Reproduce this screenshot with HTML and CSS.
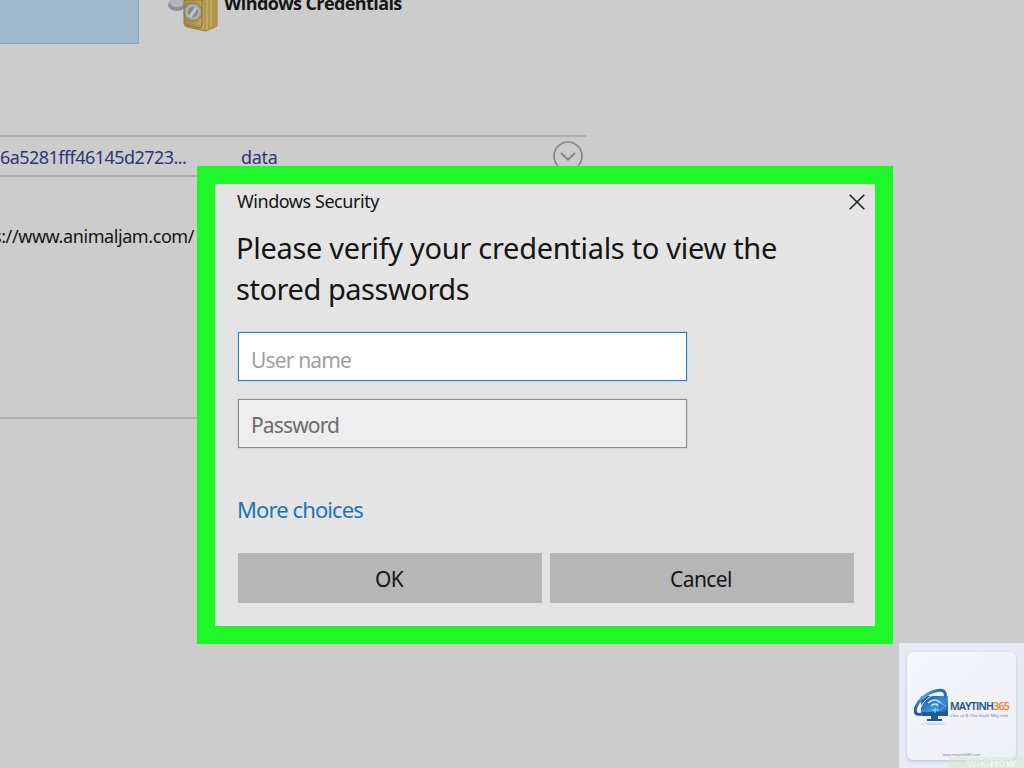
FILE: index.html
```html
<!DOCTYPE html>
<html lang="en">
<head>
<meta charset="utf-8">
<title>Windows Security</title>
<link rel="stylesheet" href="styles.css">
</head>
<body>
<main class="manager">
  <header class="tabs">
    <div class="tab-selected"></div>
    <div class="tab">
      <svg class="vault" viewBox="0 0 54 34" width="54" height="34">
        <defs>
          <linearGradient id="gold" x1="0" x2="1"><stop offset="0" stop-color="#a28b45"/><stop offset=".6" stop-color="#bda657"/><stop offset="1" stop-color="#9a8135"/></linearGradient>
        </defs>
        <ellipse cx="10" cy="5" rx="9" ry="6" fill="#8d9298"/>
        <ellipse cx="10" cy="3" rx="7" ry="4" fill="#b3b7bb"/>
        <path d="M17 0H50V26L39 31L20 27Q17 26 17 23Z" fill="url(#gold)" stroke="#8c7a3c"/>
        <path d="M37 0V30L39 31L50 26V0Z" fill="#ae974a"/>
        <path d="M40 0V29M44 0V27" stroke="#c7b269" stroke-width="1.500"/>
        <path d="M35 0V24Q35 28 32 28L20 25" fill="none" stroke="#857233"/>
        <circle cx="26" cy="12" r="9" fill="#a5a594" stroke="#817b5f"/>
        <circle cx="26" cy="12" r="6" fill="#84898b" stroke="#b3b5ad" stroke-width="1.500"/>
        <path d="M23 17L29 8" stroke="#c4c7c5" stroke-width="3"/>
      </svg>
      <strong class="tab-title">Windows Credentials</strong>
    </div>
  </header>
  <section class="entry">
    <div class="entry-head">
      <span class="entry-name">6a5281fff46145d2723...</span>
      <span class="entry-kind">data</span>
      <svg class="expand" viewBox="0 0 32 32" width="32" height="32" fill="none" stroke="#858585">
        <circle cx="16" cy="16" r="14" stroke-width="1.7"/>
        <path d="M9 13L16 19.500L23 13" stroke-width="2.200"/>
      </svg>
    </div>
    <div class="entry-body"><span class="url">s://www.animaljam.com/</span></div>
  </section>
</main>

<section class="dialog">
  <header class="titlebar">
    <span class="caption">Windows Security</span>
    <svg class="close" viewBox="0 0 16 16" width="16" height="16"><path d="M.7 .7L15.3 15.3M15.3 .7L.7 15.3" stroke="#222" stroke-width="1.6"/></svg>
  </header>
  <h1 class="prompt"><span class="prompt-a">Please verify your credentials to view the</span><br><span class="prompt-b">stored passwords</span></h1>
  <div class="field field-active"><span class="user">User name</span></div>
  <div class="field"><span class="pass">Password</span></div>
  <a class="more">More choices</a>
  <div class="actions">
    <div class="button"><span class="ok">OK</span></div>
    <div class="button"><span class="cancel">Cancel</span></div>
  </div>
</section>

<aside class="badge">
  <div class="badge-card">
    <div class="brand">
      <svg class="logo" viewBox="0 0 36 38" width="36" height="38">
        <defs>
          <linearGradient id="screen" x1="0" y1="0" x2="1" y2="1"><stop offset="0" stop-color="#1c4c99"/><stop offset=".55" stop-color="#3a98d8"/><stop offset="1" stop-color="#1a4d9a"/></linearGradient>
          <linearGradient id="orbit" x1="0" y1="1" x2="1" y2="0"><stop offset="0" stop-color="#164c99"/><stop offset=".5" stop-color="#58a9dd"/><stop offset="1" stop-color="#2861aa"/></linearGradient>
        </defs>
        <ellipse cx="19" cy="36" rx="13" ry="1.2" fill="#d5d9e2"/>
        <rect x="7" y="8" width="27" height="19" rx="1" fill="url(#screen)"/>
        <path d="M8 24H34V28H8ZM17 28H24V31H28V33H13V31H17Z" fill="#1d599f"/>
        <path d="M14 15Q20.500 9 27 15M17 18Q20.500 14 25 18" fill="none" stroke="#c5e8fb" stroke-width="1.3"/>
        <path d="M21 20V25M18 22H24" stroke="#a7dcf5"/>
        <path d="M8 26Q-1 28 2 19Q6 9 18 4Q29 0 31 5Q33 11 25 19" fill="none" stroke="url(#orbit)" stroke-width="3"/>
        <path d="M6 21Q10 10 22 6" fill="none" stroke="#e7f4fc" stroke-width="1"/>
        <path d="M24 14V23L32 18Z" fill="#2b7bc2" stroke="#9bcced" stroke-width=".6"/>
      </svg>
      <div class="brand-text">
        <div class="brand-name">MAYTINH<span class="brand-number">365</span></div>
        <div class="tagline">Chia sẻ &amp; Thủ thuật Máy tính</div>
      </div>
    </div>
    <div class="site">www.maytinh365.com</div>
  </div>
  <div class="watermark">wiki<b>How</b></div>
</aside>
</body>
</html>
```
FILE: styles.css
```css
* { box-sizing: border-box; }
body {
  margin: 0; width: 1024px; height: 768px; overflow: hidden; position: relative;
  background: #ccc; color: #151515;
  font-family: "Noto Sans", "Open Sans", sans-serif; line-height: 1;
}
span { white-space: nowrap; }
.tabs { display: flex; height: 135px; }
.tab-selected { width: 139px; height: 44px; background: #a0b8cb; border: solid #87a8c2; border-width: 0 1px 1px 0; }
.tab { display: flex; margin-left: 28px; }
.tab-title { margin: -6px 0 0 3px; font-family: "Open Sans", sans-serif; font-size: 18px; white-space: nowrap; letter-spacing: -.6px; }
.entry { width: 586px; }
.entry-head {
  display: grid; grid-template-columns: 241px 311px 32px; height: 42px;
  border: solid #adadad; border-width: 2px 0; color: #303579; font-size: 18px;
}
.entry-name, .entry-kind { padding-top: 11px; }
.entry-name { letter-spacing: -.55px; }
.entry-kind { letter-spacing: -.3px; }
.expand { margin-top: 3px; }
.entry-body { height: 242px; padding-top: 50px; border-bottom: 2px solid #adadad; font-size: 18px; }
.url { margin-left: -7px; letter-spacing: -.42px; }

.dialog {
  position: absolute; left: 197px; top: 166px; width: 696px; height: 478px;
  border: 18px solid #20f729; background: #e4e4e4; padding: 8px 21px 0 22px;
  box-shadow: 0 0 2px #9cdf9f;
}
.titlebar { display: flex; justify-content: space-between; height: 31px; }
.caption { font-size: 18px; letter-spacing: -.45px; }
.close { margin: 2px -11px 0 0; }
.prompt { margin: 4px 0 23px -1px; font-size: 29px; line-height: 41px; font-weight: 400; white-space: nowrap; }
.prompt-a { letter-spacing: -.3px; }
.prompt-b { letter-spacing: -.45px; }
.field { width: 449px; height: 49px; padding: 14px 12px; margin: 0 0 18px 1px; border: 1.5px solid #8c8c8c; background: #eee; color: #6b6b6b; font-size: 21px; line-height: 22px; outline: 1px solid #d7d7d7; }
.field-active { padding-top: 16px; border-color: #327fb7; outline-color: #b9dcee; background: #fff; color: #a0a0a0; }
.user, .pass { letter-spacing: -.85px; }
.more { display: block; margin: 50px 0 0; height: 55px; color: #1d75b8; font-size: 22px; letter-spacing: -.9px; }
.actions { display: grid; grid-template-columns: 304px 304px; gap: 8px; margin-left: 1px; width: 616px; }
.button { display: flex; align-items: center; justify-content: center; height: 50px; background: #b6b6b6; font-size: 21px; letter-spacing: -.6px; padding: 2px 2px 0 0; }

.badge { position: absolute; left: 899px; top: 643px; width: 125px; height: 125px; padding: 9px 8px; background: #e6eaf3; }
.badge-card { height: 108px; width: 109px; border-radius: 6px; background: linear-gradient(135deg, #f5f6fa, #eceff6); box-shadow: 0 1px 3px #b7becb; padding: 36px 7px 0; }
.brand { display: flex; height: 65px; }
.logo { flex: none; }
.brand-text { padding-top: 13px; }
.brand-name { font: 600 10.5px/11px "Open Sans", sans-serif; letter-spacing: -.7px; color: #245487; -webkit-text-stroke: .2px; }
.brand-number { color: #ed8937; }
.tagline { font-size: 4.3px; line-height: 6px; white-space: nowrap; color: #6d82a1; }
.site { text-align: center; font-size: 3.6px; line-height: 4px; color: #78878c; }
.watermark { position: absolute; left: 50px; bottom: 0; width: 75px; height: 11px; padding-left: 10px; background: rgba(211, 231, 208, .5); color: #eef3ee; font-size: 12px; line-height: 11px; text-align: center; }
```
